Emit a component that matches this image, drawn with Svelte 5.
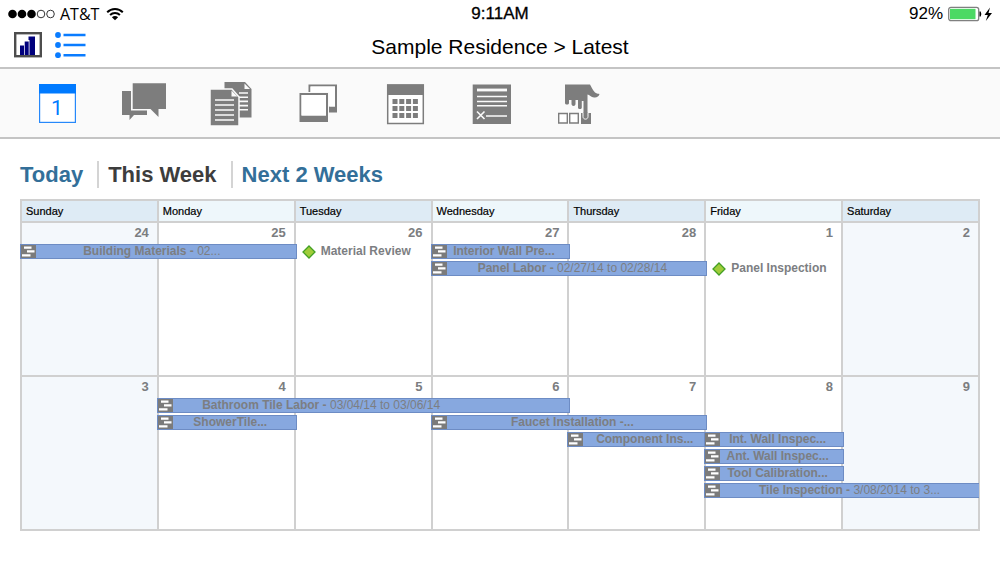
<script>
  const days = ['Sunday', 'Monday', 'Tuesday', 'Wednesday', 'Thursday', 'Friday', 'Saturday'];

  const task = (lane, span, title, dates = '', more = {}) => ({ kind: 'task', lane, span, title, dates, trail: 8, ...more });
  const milestone = (lane, title) => ({ kind: 'milestone', lane, span: 1, title });

  const weeks = [
    [
      { date: 24, items: [task(1, 2, 'Building Materials - ', '02...', { trail: 28 })] },
      { date: 25, items: [] },
      { date: 26, items: [milestone(1, 'Material Review')] },
      { date: 27, items: [task(1, 1, 'Interior Wall Pre...'), task(2, 2, 'Panel Labor - ', '02/27/14 to 02/28/14')] },
      { date: 28, items: [] },
      { date: 1, items: [milestone(2, 'Panel Inspection')] },
      { date: 2, items: [] },
    ],
    [
      { date: 3, items: [] },
      { date: 4, items: [task(1, 3, 'Bathroom Tile Labor - ', '03/04/14 to 03/06/14', { trail: 100 }), task(2, 1, 'ShowerTile...')] },
      { date: 5, items: [] },
      { date: 6, items: [task(2, 2, 'Faucet Installation -...')] },
      { date: 7, items: [task(3, 1, 'Component Ins...', '', { trail: 0 })] },
      { date: 8, items: [
        task(3, 1, 'Int. Wall Inspec...'),
        task(4, 1, 'Ant. Wall Inspec...'),
        task(5, 1, 'Tool Calibration...'),
        task(6, 2, 'Tile Inspection - ', '3/08/2014 to 3...', { continues: true, trail: 0 }),
      ] },
      { date: 9, items: [] },
    ],
  ];

  const ranges = ['Today', 'This Week', 'Next 2 Weeks'];
  let range = $state('This Week');
</script>

<div class="page">
  <header>
    <div class="status">
      <div class="carrier">
        <svg width="47" height="12" viewBox="0 0 47 12" aria-hidden="true">
          <g fill="#000"><circle cx="4.5" cy="6" r="4.3" /><circle cx="14" cy="6" r="4.3" /><circle cx="23.5" cy="6" r="4.3" /></g>
          <g fill="none" stroke="#333"><circle cx="33" cy="6" r="3.8" /><circle cx="42.5" cy="6" r="3.8" /></g>
        </svg>
        <span>AT&amp;T</span>
        <svg width="18" height="14" viewBox="0 0 18 14" aria-hidden="true">
          <g fill="none" stroke="#000" stroke-width="2">
            <path d="M1.2 5.2C5.5.9 12.500.9 16.800 5.200" />
            <path d="M4.100 8C6.800 5.300 11.200 5.300 13.900 8" />
          </g>
          <path d="M9 13.300 5.900 10.200C7.600 8.600 10.400 8.600 12.100 10.200Z" />
        </svg>
      </div>
      <time>9:11AM</time>
      <div class="power">
        <span>92%</span>
        <svg width="44" height="16" viewBox="0 0 44 16" aria-hidden="true">
          <rect x=".7" y="1.300" width="30" height="13.400" rx="2.200" fill="#fff" stroke="#808080" stroke-width="1.300" />
          <rect x="2" y="2.800" width="25.500" height="10.400" fill="#4cd964" />
          <path d="M31.500 5.500h1.200q1.300 2.500 0 5h-1.200z" />
          <path d="M42 1.500 36.500 9h3.300l-2 6L44 7h-3.500z" />
        </svg>
      </div>
    </div>
    <div class="titlebar">
      <div class="views">
        <button aria-label="Chart">
          <svg width="28" height="26" viewBox="0 0 28 26">
            <rect x="1.200" y="1.200" width="25.600" height="23" fill="#fff" stroke="#4d4d4d" stroke-width="2.400" />
            <g fill="#00007c"><path d="M6 13.500h4V23H6z" /><path d="M10.700 9.500h4V23h-4z" /><path d="M14.500 4.500H21V23h-5.500V8h-1z" /></g>
          </svg>
        </button>
        <button aria-label="List">
          <svg width="31" height="26" viewBox="0 0 31 26">
            <g fill="#0a7cff"><circle cx="3" cy="3" r="2.900" /><circle cx="3" cy="13" r="2.900" /><circle cx="3" cy="23.200" r="2.900" />
              <path d="M8.500 1.700H30.500V4.300H8.500zM8.500 11.700H30.500V14.300H8.500zM8.500 22H30.500V24.600H8.500z" /></g>
          </svg>
        </button>
      </div>
      <h1>Sample Residence &gt; Latest</h1>
    </div>
  </header>

  <nav class="tools" aria-label="Tools">
    <button aria-label="Day">
      <svg viewBox="0 0 44 44">
        <rect x="4.600" y="2.600" width="35.800" height="37.800" fill="#fff" stroke="#2688fa" stroke-width="1.200" />
        <path fill="#007aff" d="M4 2h37v9.500H4z" />
        <text x="22" y="33" text-anchor="middle">1</text>
      </svg>
    </button>
    <button aria-label="Messages">
      <svg viewBox="0 0 44 44">
        <path d="M0 9H9V28.500H25V33H12L7.500 38V33H0z" />
        <path d="M10.700 1.200H44V27H36.500V35L28.500 27H10.700z" />
      </svg>
    </button>
    <button aria-label="Documents">
      <svg viewBox="0 0 44 44">
        <path d="M15.500 0H36L42.500 7V35.500H15.500z" />
        <path d="M35.500 1.500V7H41" fill="#fafafa" />
        <path d="M30 11H39M30 15.200H39M30 19.400H39M30 23.600H39M30 27.800H39" class="line" />
        <path d="M1 7H23L30 15V44H1z" stroke="#fafafa" stroke-width="1.500" />
        <path d="M22.500 8.500V14.500H28.500z" fill="#fafafa" />
        <path d="M6 18H25M6 23H25M6 28H25M6 33H25M6 38H25" class="line" />
      </svg>
    </button>
    <button aria-label="Photos">
      <svg viewBox="0 0 44 44">
        <path d="M12.500 2.500H41V30.500H33V24.500H39V4.500H14.500V10H12.500z" />
        <path d="M14.500 4.500H39V24.500H33.500V10H14.500z" fill="#fff" />
        <path fill-rule="evenodd" d="M3.500 11H32V40H3.500zM5.500 13V33.500H30V13z" />
        <path d="M5.500 13H30V33.500H5.500z" fill="#fff" />
      </svg>
    </button>
    <button aria-label="Calendar">
      <svg viewBox="0 0 44 44">
        <rect x="4.700" y="3" width="35.600" height="38.500" fill="#fff" stroke="#7d7d7d" stroke-width="1.500" />
        <path d="M4 2.500H41V13H4z" />
        {#each [17, 24, 31] as y}
          {#each [9.500, 16.300, 23.100, 29.900] as x}
            <rect {x} {y} width="5" height="5" />
          {/each}
        {/each}
      </svg>
    </button>
    <button aria-label="Contracts">
      <svg viewBox="0 0 44 44">
        <path d="M2.700 2.500H41V42H2.700z" />
        <path d="M7 8H37" stroke="#fafafa" stroke-width="2.800" />
        <path d="M7 14.500H37M7 19.500H37M7 23.700H37M16 34H37" class="line" />
        <path d="M7 29.500 14.500 37M14.500 29.500 7 37" class="line" />
      </svg>
    </button>
    <button aria-label="Selections">
      <svg viewBox="0 0 44 44">
        <path d="M1.700 31.500H10.300V41H1.700zM12.700 31.500H21.300V41H12.700z" fill="#fff" stroke="#7d7d7d" stroke-width="1.400" />
        <path d="M24 31H34V42H24z" />
        <path d="M26 30V34.500C26 38 31 38 31 34.500V30z" stroke="#fafafa" />
        <path d="M8 2.500H33C34.500 5 35.500 8 38 10.500C40 12 41.500 11.500 42.500 12C42 14.500 39.500 16 37 15.500C34 15 32.500 13 30.500 12.500V31H26.500V19H24.800V25.500C24.800 27.500 21 27.500 21 25.500V18H18.500V22C18.500 24.500 14.500 24.500 14.500 22V18H12V21C12 23 8 23 8 21z" />
      </svg>
    </button>
  </nav>

  <main>
    <div class="ranges">
      {#each ranges as name}
        <button class:active={range === name} aria-pressed={range === name} onclick={() => (range = name)}>{name}</button>
      {/each}
    </div>

    <table>
      <thead>
        <tr>{#each days as day}<th scope="col">{day}</th>{/each}</tr>
      </thead>
      <tbody>
        {#each weeks as week}
          <tr>
            {#each week as day}
              <td>
                <div class="date">{day.date}</div>
                {#if day.items.length}
                  <ul>
                    {#each day.items as item}
                      <li class={item.kind} class:continues={item.continues} style="--lane: {item.lane}; --span: {item.span}; --trail: {item.trail ?? 0}px">
                        {#if item.kind === 'task'}
                          <svg width="15" height="13" viewBox="0 0 15 13" aria-hidden="true">
                            <path fill="#7b7b7b" d="M0 0h15v13H0z" />
                            <path fill="#fff" d="M3 1.500h7.500v2.300H3zM6 5.300h7.500v2.300H6zM1 9.300h8.500v2.300H1z" />
                          </svg>
                          <span class="label"><b>{item.title}</b>{item.dates}</span>
                        {:else}
                          <svg width="14" height="14" viewBox="0 0 14 14" aria-hidden="true">
                            <path d="M7 1 13 7 7 13 1 7z" fill="#a0cc3a" stroke="#43a024" stroke-width="1.300" />
                          </svg>
                          <b>{item.title}</b>
                        {/if}
                      </li>
                    {/each}
                  </ul>
                {/if}
              </td>
            {/each}
          </tr>
        {/each}
      </tbody>
    </table>
  </main>
</div>

<style>
  :global(body) {
    background: #fff;
  }
  .page {
    font-family: "Liberation Sans", Arial, sans-serif;
    color: #000;
  }
  button {
    padding: 0;
    border: 0;
    background: none;
    font: inherit;
    color: inherit;
    cursor: pointer;
  }
  svg {
    display: block;
    flex: none;
  }
  header {
    border-bottom: 2px solid #c4c4c4;
  }
  .status {
    display: grid;
    grid-template-columns: 1fr auto 1fr;
    align-items: center;
    height: 28px;
    padding: 0 8px;
    font-size: 17px;
  }
  .carrier,
  .power {
    display: flex;
    align-items: center;
    gap: 5px;
  }
  .carrier {
    font-family: "Open Sans", sans-serif;
    font-size: 16px;
  }
  .carrier svg:last-child {
    margin-left: 2px;
  }
  time {
    font-size: 17px;
    -webkit-text-stroke: 0.3px #000;
  }
  .power {
    justify-content: flex-end;
  }
  .titlebar {
    display: grid;
    grid-template-columns: 1fr auto 1fr;
    height: 39px;
    padding: 0 14px;
  }
  .views {
    display: flex;
    align-items: flex-start;
    gap: 13px;
    padding-top: 4px;
  }
  h1 {
    margin: 0;
    font-size: 21px;
    font-weight: 400;
    line-height: 38px;
  }
  .tools {
    display: flex;
    gap: 43px;
    padding: 13px 35px 11px;
    border-bottom: 2px solid #c4c4c4;
    background: #fafafa;
  }
  .tools svg {
    width: 44px;
    height: 44px;
    fill: #7d7d7d;
  }
  .tools .line {
    fill: none;
    stroke: #fafafa;
    stroke-width: 1.6;
  }
  .tools text {
    fill: #007aff;
    font-family: Roboto, sans-serif;
    font-size: 21px;
  }
  main {
    padding: 22px 20px 32px;
  }
  .ranges {
    display: flex;
    margin-bottom: 11px;
    font-size: 22px;
    font-weight: 700;
    line-height: 27px;
    color: #336f99;
  }
  .ranges button {
    padding: 0 14px 0 9px;
  }
  .ranges button:first-child {
    padding-left: 0;
  }
  .ranges button + button {
    border-left: 2px solid #d4d4d4;
  }
  .ranges .active {
    color: #3d3d3d;
  }
  table {
    width: 100%;
    border-collapse: collapse;
    table-layout: fixed;
  }
  th,
  td {
    border: 2px solid #d0d0d0;
    padding: 0;
  }
  th {
    height: 20px;
    padding-left: 4px;
    background: #eef7fb;
    font-size: 11px;
    font-weight: 400;
    text-align: left;
    -webkit-text-stroke: 0.2px #000;
  }
  th:nth-child(odd) {
    background: #deebf5;
  }
  td {
    height: 152px;
    vertical-align: top;
  }
  td:first-child,
  td:last-child {
    background: #f4f8fc;
  }
  .date {
    padding: 2px 8px 0 0;
    font-size: 13px;
    font-weight: 700;
    line-height: 16px;
    text-align: right;
    color: #7b7d80;
  }
  ul {
    display: grid;
    grid-template-columns: minmax(0, 1fr);
    grid-auto-rows: 15px;
    gap: 2px;
    margin: 3px 0 0 -2px;
    padding: 0;
    list-style: none;
    font-size: 12px;
    line-height: 13px;
    color: #7c7e82;
  }
  li {
    position: relative;
    z-index: 1;
    grid-row: var(--lane);
    grid-column: 1;
    display: flex;
    align-items: center;
    box-sizing: border-box;
    white-space: nowrap;
  }
  .task {
    width: calc(var(--span) * 100% + 3px);
    border: 1px solid #6d8cc4;
    background: #87a8df;
  }
  .task.continues {
    width: calc(var(--span) * 100% + 1px);
    border-right: 0;
  }
  .label {
    flex: 1;
    padding-right: var(--trail);
    text-align: center;
  }
  .milestone {
    gap: 5px;
    padding-left: 8px;
  }
</style>
